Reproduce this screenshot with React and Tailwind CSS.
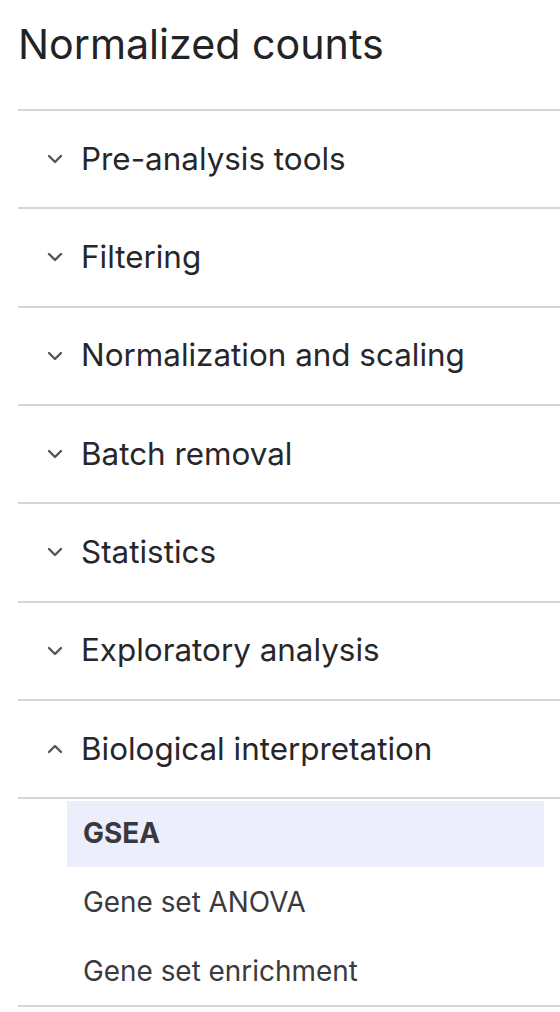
import { ChevronDown, ChevronUp } from "lucide-react";

const sections = [
  "Pre-analysis tools",
  "Filtering",
  "Normalization and scaling",
  "Batch removal",
  "Statistics",
  "Exploratory analysis",
];

const subItems = ["GSEA", "Gene set ANOVA", "Gene set enrichment"];

function SectionRow({ label, open }) {
  const Icon = open ? ChevronUp : ChevronDown;
  return (
    <div className="flex items-center h-[98.33px] border-t-2 border-[#d6d6d6] pl-[25px]">
      <Icon size={24} strokeWidth={2.4} className="text-[#555558] shrink-0" />
      <span className="ml-[14px] text-[31.4px] text-[#27272b]">{label}</span>
    </div>
  );
}

export default function App() {
  return (
    <div
      className="min-h-[1012px] bg-white pl-[18px] overflow-hidden"
      style={{ fontFamily: "Inter, 'Noto Sans', sans-serif" }}
    >
      <h1 className="h-[109px] pt-[16px] text-[41.2px] leading-[56px] text-[#232326] font-normal">
        Normalized counts
      </h1>

      {sections.map((s) => (
        <SectionRow key={s} label={s} />
      ))}
      <SectionRow label="Biological interpretation" open />

      <div className="border-t-2 border-b-2 border-[#d6d6d6] flex flex-col gap-[3px] pt-[2px]">
        {subItems.map((item, i) => (
          <div
            key={item}
            className={
              "ml-[49px] mr-[16px] h-[66px] flex items-center pl-[16px] text-[27.9px] " +
              (i === 0
                ? "bg-[#eceefb] font-bold text-[#38383d]"
                : "text-[#3a3a3f]")
            }
          >
            {item}
          </div>
        ))}
      </div>
    </div>
  );
}
